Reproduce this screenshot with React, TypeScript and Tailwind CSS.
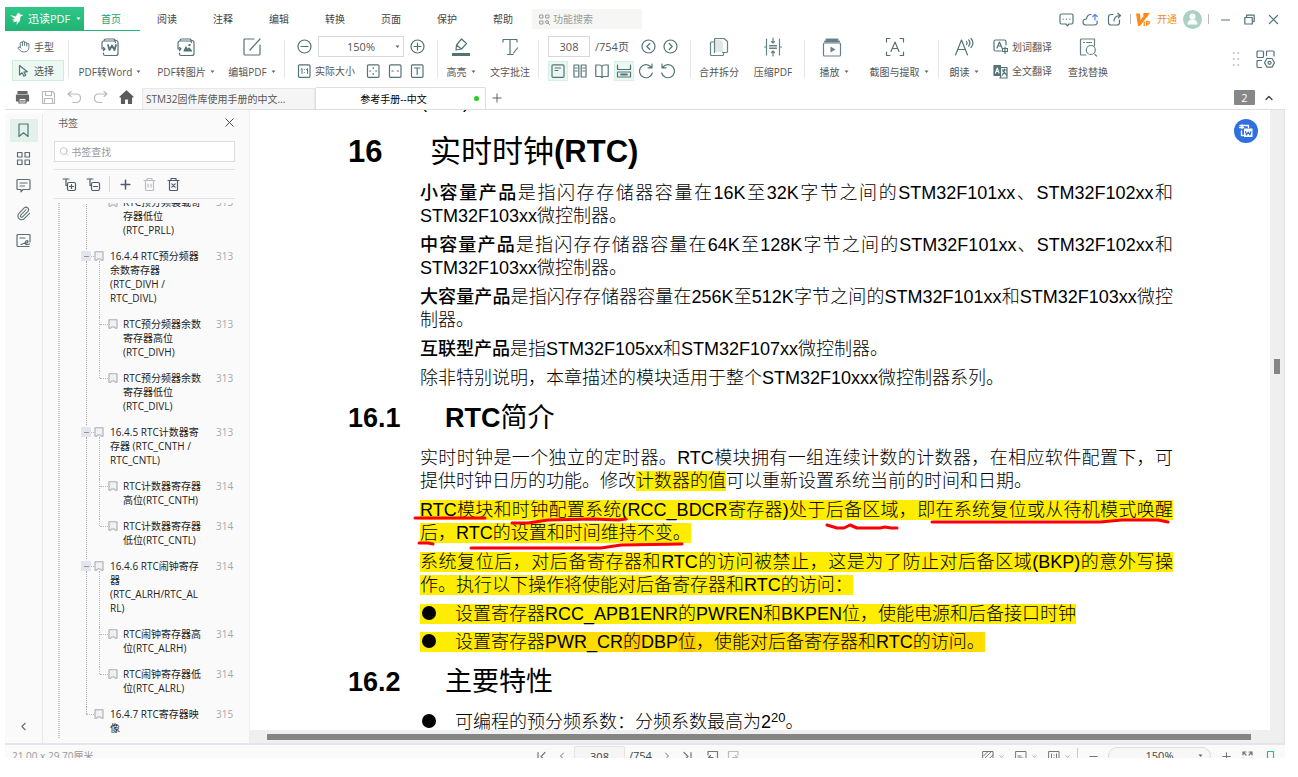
import React from "react";
import type { ReactNode } from "react";
import { Hand, Paperclip, Search, Plus, Minus, X, ChevronLeft, ChevronRight, ChevronUp, ChevronDown } from "lucide-react";

type IconProps = { s?: number; w?: number; sw?: number; c?: string; children: ReactNode };

/* Stroke icon on a pixel grid of its own size. */
function Icon({ s = 20, w, sw = 1.2, c = "", children }: IconProps) {
  return (
    <svg
      aria-hidden="true"
      width={w ?? s}
      height={s}
      viewBox={`0 0 ${w ?? s} ${s}`}
      fill="none"
      stroke="currentColor"
      strokeWidth={sw}
      strokeLinecap="round"
      strokeLinejoin="round"
      className={`shrink-0 ${c}`}
    >
      {children}
    </svg>
  );
}

function Caret({ c = "" }: { c?: string }) {
  return (
    <svg aria-hidden="true" width="5" height="4" viewBox="0 0 5 4" className={`shrink-0 fill-[#666] ${c}`}>
      <path d="M0.5 0.5h4L2.500 3z" />
    </svg>
  );
}

function Divider() {
  return <span className="h-[38px] w-px shrink-0 bg-[#e6e6e6]" />;
}

function BigTool({ label, caret, w, children }: { label: string; caret?: boolean; w: string; children: ReactNode }) {
  return (
    <button className={`flex h-[46px] shrink-0 flex-col items-center justify-between whitespace-nowrap ${w}`}>
      <span className="flex h-[22px] items-center">{children}</span>
      <span className="flex h-5 items-center gap-1">
        {label}
        {caret && <Caret />}
      </span>
    </button>
  );
}

function SmallTool({ label, active, children }: { label: string; active?: boolean; children: ReactNode }) {
  return (
    <button
      aria-label={label}
      className={`flex size-5 shrink-0 items-center justify-center border ${active ? "border-[#d3f0e3] bg-[#eaf8f2]" : "border-transparent"}`}
    >
      {children}
    </button>
  );
}

function Ribbon() {
  return (
    <div className="flex h-[55px] shrink-0 items-center overflow-hidden pl-[7px] text-[#555]">
      <div className="flex w-[52px] shrink-0 flex-col gap-[3px]">
        <button className="flex h-[21px] items-center gap-1 border border-transparent px-1">
          <Hand size={13} strokeWidth={1.7} className="text-[#547377]" />
          手型
        </button>
        <button className="flex h-[21px] items-center gap-1 border border-[#cfeedd] bg-[#ecf9f3] px-1">
          <Icon s={13} c="text-[#547377]">
            <path d="M2.500 1.500v9.500l2.600-2.200 1.800 3.400 1.800-.9-1.700-3.200 3.400-.4z" />
          </Icon>
          选择
        </button>
      </div>
      <span className="w-1 shrink-0" />
      <Divider />
      <div className="flex w-[215px] shrink-0 gap-[6px] pl-1">
        <BigTool label="PDF转Word" caret w="w-[74px]">
          <Icon s={20} c="text-[#547377]">
            <path d="M4 4V3.500Q4 2 6 2h8l1.500 1.500M2 8V5.500q0-1.500 2-1.500h10q1.500 0 1.500 1.500M2 8v4h3M3.500 10.500l1.500 1.500-1.500 1.500M3.500 16v1q0 1.500 1.500 1.500h11q2 0 2-2V5.500q0-1.500-1.500-2" />
            <path strokeWidth="1.800" d="M8 8l1.500 5L12 8.500l2.500 4.500L16 8" />
          </Icon>
        </BigTool>
        <BigTool label="PDF转图片" caret w="w-[66px]">
          <Icon s={20} c="text-[#547377]">
            <path d="M4 4V3.500Q4 2 6 2h8l1.500 1.500M2 8V5.500q0-1.500 2-1.500h10q1.500 0 1.500 1.500M2 8v4h3M3.500 10.500l1.500 1.500-1.500 1.500M3.500 16v1q0 1.500 1.500 1.500h11q2 0 2-2V5.500q0-1.500-1.500-2" />
            <path fill="currentColor" d="M8 14l2-4 2 3 1-2 2.500 3zM13 7.500h1v1h-1z" />
          </Icon>
        </BigTool>
        <BigTool label="编辑PDF" caret w="w-[54px]">
          <Icon s={20} c="text-[#547377]">
            <path d="M12 2H3Q2 2 2 3v14q0 1 1 1h14q1 0 1-1V8M18 2L8 13" />
          </Icon>
        </BigTool>
      </div>
      <Divider />
      <div className="flex w-[152px] shrink-0 flex-col gap-1 pl-3">
        <div className="flex h-[21px] items-center gap-[6px] text-[#547377]">
          <button aria-label="缩小">
            <Icon s={15}>
              <circle cx="7.500" cy="7.500" r="6.500" />
              <path d="M4 7.500h7" />
            </Icon>
          </button>
          <label className="relative flex h-[21px] w-[86px] items-center">
            <select aria-label="缩放比例" className="h-[21px] w-full appearance-none border border-[#d8d8d8] bg-white text-center text-[11px] text-[#555] [text-align-last:center]">
              <option>150%</option>
            </select>
            <Caret c="absolute right-1" />
          </label>
          <button aria-label="放大">
            <Icon s={15}>
              <circle cx="7.500" cy="7.500" r="6.500" />
              <path d="M4 7.500h7M7.500 4v7" />
            </Icon>
          </button>
        </div>
        <div className="flex h-5 items-center text-[#547377]">
          <button className="flex items-center gap-1 text-[#555]">
            <Icon s={14} c="text-[#547377]">
              <rect x="1.500" y=".800" width="11.500" height="12.500" rx="1" />
              <path strokeWidth="1" d="M4 5.500l1-1v5M7.300 5.500v.1M7.300 8.500v.1M9.500 5.500l1-1v5" />
            </Icon>
            实际大小
          </button>
          <span className="flex gap-[2px] pl-2">
            <SmallTool label="适合页面">
              <Icon s={14}>
                <rect x="1.500" y=".800" width="11.500" height="12.500" rx="1" />
                <path d="M7.200 3.500v1M7.200 9.500v1M3.800 7h1M9.800 7h1" />
              </Icon>
            </SmallTool>
            <SmallTool label="适合宽度">
              <Icon s={14}>
                <rect x="1.500" y=".800" width="11.500" height="12.500" rx="1" />
                <path d="M4 7h1.200M9.300 7h1.200" />
              </Icon>
            </SmallTool>
            <SmallTool label="适合文字">
              <Icon s={14}>
                <rect x="1.500" y=".800" width="11.500" height="12.500" rx="1" />
                <path d="M4.500 4h5.500M7.200 4v6.500" />
              </Icon>
            </SmallTool>
          </span>
        </div>
      </div>
      <Divider />
      <div className="flex w-[100px] shrink-0 gap-2 pl-1">
        <BigTool label="高亮" caret w="w-[38px]">
          <Icon s={20} c="text-[#547377]">
            <path strokeWidth="3" strokeLinecap="butt" d="M1 17.500h18" />
            <path d="M5 13l.5-5 5-6 5 4.500-5 5.500zM5.500 8l5 4" />
          </Icon>
        </BigTool>
        <BigTool label="文字批注" w="w-11">
          <Icon s={20} c="text-[#547377]">
            <path d="M3 5V2.500h14V5M10 2.500V17M7.500 17.500H13M17.500 11l-4 5" />
          </Icon>
        </BigTool>
      </div>
      <Divider />
      <div className="flex w-[151px] shrink-0 flex-col gap-1 pl-[9px] text-[#547377]">
        <div className="flex h-[21px] items-center">
          <input aria-label="页码" defaultValue="308" className="h-[21px] w-[42px] border border-[#d8d8d8] text-center text-[11px] text-[#555]" />
          <span className="w-[51px] pl-[5px] text-[11px] text-[#555]">/754页</span>
          <button aria-label="上一页">
            <Icon s={15}>
              <circle cx="7.500" cy="7.500" r="6.500" />
              <path d="M8.800 4.500l-3 3 3 3" />
            </Icon>
          </button>
          <button aria-label="下一页" className="ml-[7px]">
            <Icon s={15}>
              <circle cx="7.500" cy="7.500" r="6.500" />
              <path d="M6.200 4.500l3 3-3 3" />
            </Icon>
          </button>
        </div>
        <div className="flex h-5 items-center gap-[2px]">
          <SmallTool label="单页" active>
            <Icon s={14}>
              <rect x="1" y=".800" width="12" height="12.500" rx="1" />
              <path d="M4 4h5.500M4 6.500h3" />
            </Icon>
          </SmallTool>
          <SmallTool label="双页">
            <Icon s={14}>
              <path d="M1 1h4.800v12H1zM8.200 1H13v12H8.200zM2.500 4h1.700M2.500 7h1.700M9.800 4h1.700M9.800 7h1.700" />
            </Icon>
          </SmallTool>
          <SmallTool label="书籍">
            <Icon s={14}>
              <path d="M7 2.500Q6 1 4.500 1H.8v11.500h4.700L7 13.500l1.500-1h4.700V1H9.500Q8 1 7 2.500zM7 2.500v11" />
            </Icon>
          </SmallTool>
          <SmallTool label="连续" active>
            <Icon s={14} w={16}>
              <path d="M1.500 1v4.500h13V1M1.500 13V8h13v5z" />
              <path strokeWidth="1.800" d="M5 10.500h6" />
            </Icon>
          </SmallTool>
          <SmallTool label="顺时针旋转">
            <Icon s={16}>
              <path d="M13 4A6.500 6.500 0 1 0 14.300 10M14 1v3.800h-4" />
            </Icon>
          </SmallTool>
          <SmallTool label="逆时针旋转">
            <Icon s={16}>
              <path d="M3 4A6.500 6.500 0 1 1 1.700 10M2 1v3.800h4" />
            </Icon>
          </SmallTool>
        </div>
      </div>
      <Divider />
      <div className="flex w-[113px] shrink-0 gap-[10px] pl-[6px]">
        <BigTool label="合并拆分" w="w-11">
          <Icon s={20} c="text-[#668285]">
            <path d="M5.500 5H2.500Q1.500 5 1.500 6v11.500q0 1 1 1h11q1 0 1-1V16" />
            <path fill="#dfe7e7" stroke="none" d="M6 2.500h6l2 3V15H6z" />
            <path d="M5.500 15.500V2.500q0-1 1-1H15l3.500 3V14.500q0 1-1 1h-4" />
          </Icon>
        </BigTool>
        <BigTool label="压缩PDF" w="w-11">
          <Icon s={20} c="text-[#668285]">
            <path d="M3.500 2v16M16.500 2v16M1.500 10h1M17.500 10h1M6.500 8.500h7M6.500 11.500h7M6.500 10h7M10 1v5M8.500 4.500L10 6l1.500-1.500M10 19v-5M8.500 15.500L10 14l1.500 1.500" />
          </Icon>
        </BigTool>
      </div>
      <Divider />
      <div className="flex w-[133px] shrink-0 gap-[14px] pl-[9px]">
        <BigTool label="播放" caret w="w-10">
          <Icon s={20} c="mr-1 text-[#668285]">
            <path strokeWidth="2" d="M4.500 2.500h11M3 4.500h14" />
            <rect x="1.500" y="6" width="17" height="13" rx="1" />
            <path fill="currentColor" stroke="none" d="M8.500 9.500l5 3-5 3z" />
          </Icon>
        </BigTool>
        <BigTool label="截图与提取" caret w="w-[62px]">
          <Icon s={20} c="mr-2 text-[#547377]">
            <path d="M1.500 5V1.500H5M15 1.500h3.500V5M18.500 15v3.500H15M5 18.500H1.500V15M6 14.500L10 5l4 9.500M7.300 11.500h5.400" />
          </Icon>
        </BigTool>
      </div>
      <Divider />
      <div className="flex shrink-0 items-center pl-1">
        <BigTool label="朗读" caret w="w-[42px]">
          <Icon s={20} c="text-[#547377]">
            <path d="M1.500 18L7.500 3l6 15M3.500 12.500h8M12.500 4.500q1.200 1.500 0 3M14.700 3q2.500 3 0 6M17 1.500q4 4.500 0 9" />
          </Icon>
        </BigTool>
        <div className="flex flex-col gap-1 pl-2">
          <button className="flex h-[21px] items-center gap-1">
            <Icon s={15} c="text-[#547377]">
              <path d="M8 12H2.500Q1 12 1 10.500V2.500Q1 1 2.500 1h9Q13 1 13 2.500V6M4 9l2.500-6L9 9M5 7h3M9.500 9.500h5v3h-5zM12 8v6.500" />
            </Icon>
            划词翻译
          </button>
          <button className="flex h-5 items-center gap-1">
            <Icon s={15} c="text-[#547377]">
              <path fill="currentColor" d="M1 1.500h6.500v10H1z" />
              <path d="M8 3.500h6V14H7l1-2M9.500 6h4M11.500 5v1l-2 5M10 7l3.500 4" />
              <path stroke="#fff" strokeWidth="1.100" d="M2.500 9l1.800-5L6 9M3 7.500h2.500" />
            </Icon>
            全文翻译
          </button>
        </div>
        <span className="w-[14px]" />
        <BigTool label="查找替换" w="w-11">
          <Icon s={20} c="text-[#668285]">
            <path d="M8 18H3.500Q2.500 18 2.500 17V3q0-1 1-1h13v7M5.500 5.500h1M8.500 5.500h5M17 17.500l1.500 1.500" />
            <circle cx="12.800" cy="13" r="4.500" />
          </Icon>
        </BigTool>
      </div>
      <div className="ml-auto flex shrink-0 items-center gap-[15px] pr-[10px] text-[#547377]">
        <Icon s={16} w={8} sw={1.6} c="text-[#b5b5b5]">
          <path d="M1.500 2h.5M6 2h.5M1.500 8h.5M6 8h.5M1.500 14h.5M6 14h.5" />
        </Icon>
        <button aria-label="自定义工具栏">
          <Icon s={20}>
            <rect x="2" y="2" width="6.500" height="6.500" rx="1" />
            <path d="M11.500 6.500V3q0-1 1-1h5.500q1 0 1 1v4M6.500 11.500H3q-1 0-1 1v5q0 1 1 1h3.500" />
            <path d="M12 9.500h5l2.500 4.300-2.500 4.300h-5l-2.500-4.300z" />
            <circle cx="14.500" cy="13.800" r="1.500" />
          </Icon>
        </button>
      </div>
    </div>
  );
}

const menus = ["首页", "阅读", "注释", "编辑", "转换", "页面", "保护", "帮助"];

function TitleBar() {
  return (
    <header className="flex h-6 shrink-0 items-center text-[#444]">
      <button className="flex h-6 w-[79px] shrink-0 items-center bg-linear-to-b from-[#2fc78a] to-[#20b373] pl-[5px] text-[11px] text-white">
        <svg aria-hidden="true" width="14" height="14" viewBox="0 0 14 14" className="shrink-0 fill-white">
          <path d="M0 3l6 1.500L7 2l2-1.500 1 2 3.500.5-3 1.500-.5 4L6.500 13l.5-3.500-4 .8 1.500-1.500L1.500 8 5 7 0 3z" />
        </svg>
        <span className="pl-1">迅读PDF</span>
        <svg aria-hidden="true" width="5" height="4" viewBox="0 0 5 4" className="ml-[6px] shrink-0 fill-white">
          <path d="M0.500 0.500h4L2.500 3z" />
        </svg>
      </button>
      <nav className="flex h-6 shrink-0">
        {menus.map((m, i) => (
          <button key={m} className={`w-14 border-b pr-[2px] ${i === 0 ? "border-[#1fb978] text-[#23a36c]" : "border-transparent"}`}>
            {m}
          </button>
        ))}
      </nav>
      <label className="flex h-5 w-[110px] shrink-0 items-center gap-[3px] bg-[#f6f7f5] pl-[7px] text-[#999]">
        <Icon s={11} sw={1} c="text-[#999]">
          <path d="M1 1h3v3H1zM7 1h3v3H7zM1 7h3v3H1zM9.300 9.300l1.200 1.200" />
          <circle cx="8" cy="8" r="1.500" />
        </Icon>
        <input aria-label="功能搜索" placeholder="功能搜索" className="w-20 bg-transparent outline-none placeholder:text-[#999]" />
      </label>
      <div className="ml-auto flex shrink-0 items-center text-[#547377]">
        <button aria-label="消息" className="flex w-6 justify-center">
          <Icon s={15}>
            <path d="M6 12H2.500Q1 12 1 10.500v-7Q1 2 2.500 2h10Q14 2 14 3.500v7q0 1.500-1.500 1.500H10l-1.500 1.800L7 12M4.200 7v.2M7.500 7v.2M10.800 7v.2" />
          </Icon>
        </button>
        <button aria-label="云上传" className="flex w-6 justify-center">
          <Icon s={15} w={17}>
            <path d="M15 9q1 4-3 4H4Q1 13 1 10t3.500-3Q5 2.500 9 2.500" />
            <path stroke="#4a86f0" d="M13 8V2.500M10.800 4.500L13 2.500l2.200 2" />
          </Icon>
        </button>
        <button aria-label="分享" className="flex w-6 justify-center">
          <Icon s={15}>
            <path d="M6 2.500H4Q1.500 2.500 1.500 5v5.500Q1.500 13 4 13h6q2.500 0 2.500-2.500V8M7 9q0-5 6-5.500M10.800 1.200l2.700 2.300-2.200 2.300" />
          </Icon>
        </button>
        <span className="mx-1 h-[10px] w-px bg-[#bbb]" />
        <button className="flex items-center gap-[6px] text-[#f08c1e]">
          <svg aria-hidden="true" width="16" height="15" viewBox="0 0 16 15">
            <path d="M1 1.500h4L5.500 8 9 3.500H7.500L9 1h6L5 14H3z" fill="#ff8a1c" />
            <path d="M9.200 9.500V14M11.500 14V9.500h1.500q1.500 0 1.500 1.200T13 12h-1.500" stroke="#ff8a1c" strokeWidth="1.300" fill="none" />
          </svg>
          开通
        </button>
        <svg aria-label="用户" width="19" height="19" viewBox="0 0 19 19" className="ml-[6px]">
          <circle cx="9.500" cy="9.500" r="9.500" fill="#a9d2c4" />
          <circle cx="9.500" cy="6.500" r="3" fill="#fff" />
          <path d="M4.500 14.500q0-5 5-5t5 5z" fill="#fff" />
        </svg>
        <span className="ml-[6px] h-[10px] w-px bg-[#bbb]" />
        <button aria-label="最小化" className="ml-1 flex w-6 justify-center">
          <Icon s={11}>
            <path d="M1.500 6h8" />
          </Icon>
        </button>
        <button aria-label="还原" className="flex w-6 justify-center">
          <Icon s={11}>
            <path d="M.8 3.500h7.500v6.500H.8zM2.500 3.300V1.200h7.700v6.300H8.500" />
          </Icon>
        </button>
        <button aria-label="关闭" className="flex w-6 justify-center">
          <Icon s={11}>
            <path d="M1.500 1.500l8 8M9.500 1.500l-8 8" />
          </Icon>
        </button>
      </div>
    </header>
  );
}

function TabBar() {
  return (
    <div className="flex h-6 shrink-0 items-center border-b border-[#dedede] text-[#333]">
      <div className="flex w-[137px] shrink-0 items-center pl-1">
        <button aria-label="打印" className="flex w-[26px] justify-center text-[#666]">
          <Icon s={15}>
            <path fill="currentColor" d="M3 1.500h9v2H3zM1.500 5h12v6h-2V8.500h-8V11h-2z" />
            <path d="M4 8.500h7V13H4zM5.500 10.800h4" />
          </Icon>
        </button>
        <button aria-label="保存" className="flex w-[26px] justify-center text-[#bbb]">
          <Icon s={15}>
            <path d="M1.500 1.500h10l2 2v10h-12zM4.500 1.500v4h6v-4M3.500 13.500V8.500h8v5" />
          </Icon>
        </button>
        <button aria-label="撤销" className="flex w-[26px] justify-center text-[#bbb]">
          <Icon s={15}>
            <path d="M4 1.500L1 4l3 2.500M1 4h8.500q4 0 4 4t-4 4.500H6" />
          </Icon>
        </button>
        <button aria-label="重做" className="flex w-[26px] justify-center text-[#bbb]">
          <Icon s={15}>
            <path d="M11 1.500L14 4l-3 2.500M14 4H5.500q-4 0-4 4t4 4.500H9" />
          </Icon>
        </button>
        <button aria-label="主页" className="flex w-[26px] justify-center text-[#5c5c5c]">
          <Icon s={15}>
            <path fill="currentColor" d="M7.500 1L14 7h-1.500v6.500H9.500V9h-4v4.500h-3V7H1z" />
          </Icon>
        </button>
      </div>
      <button className="h-[21px] w-[173px] shrink-0 self-end border border-b-0 border-[#e8e8e8] bg-[#f5f5f5] pl-[3px] text-left text-[#555]">STM32固件库使用手册的中文...</button>
      <button className="flex h-[22px] w-[171px] shrink-0 items-center self-end rounded-t-[2px] border border-b-0 border-[#dedede] bg-white">
        <span className="flex-1 pr-[3px] text-center text-black">参考手册--中文</span>
        <span className="mr-[6px] size-[5px] rounded-full bg-[#27cf1f]" />
      </button>
      <button aria-label="新建标签" className="pl-1">
        <Plus size={14} strokeWidth={1.6} className="text-[#555]" />
      </button>
      <div className="ml-auto flex items-center pr-[10px]">
        <span className="flex h-[15px] w-[21px] items-center justify-center rounded-[1px] bg-[#85888b] text-[11px] text-white">2</span>
        <button aria-label="收起功能区" className="pl-2">
          <ChevronUp size={12} strokeWidth={2.4} />
        </button>
      </div>
    </div>
  );
}

function BookmarkGlyph({ big }: { big?: boolean }) {
  return big ? (
    <Icon s={15}>
      <path d="M3 1h9v12.500L7.500 9.800 3 13.500z" />
    </Icon>
  ) : (
    <Icon s={10} sw={1.1} c="text-[#a9acb0]">
      <path fill="#f1f1f4" d="M1 .7h8v8.600H7.500L6.500 8h-3L2.500 9.300H1z" />
    </Icon>
  );
}

type Node = { lines: string[]; page: number; children?: Node[] };

const tree: Node[] = [
  {
    lines: ["16.4.4 RTC预分频器", "余数寄存器", "(RTC_DIVH /", "RTC_DIVL)"],
    page: 313,
    children: [
      { lines: ["RTC预分频器余数", "寄存器高位", "(RTC_DIVH)"], page: 313 },
      { lines: ["RTC预分频器余数", "寄存器低位", "(RTC_DIVL)"], page: 313 },
    ],
  },
  {
    lines: ["16.4.5 RTC计数器寄", "存器 (RTC_CNTH /", "RTC_CNTL)"],
    page: 313,
    children: [
      { lines: ["RTC计数器寄存器", "高位(RTC_CNTH)"], page: 314 },
      { lines: ["RTC计数器寄存器", "低位(RTC_CNTL)"], page: 314 },
    ],
  },
  {
    lines: ["16.4.6 RTC闹钟寄存", "器", "(RTC_ALRH/RTC_AL", "RL)"],
    page: 314,
    children: [
      { lines: ["RTC闹钟寄存器高", "位(RTC_ALRH)"], page: 314 },
      { lines: ["RTC闹钟寄存器低", "位(RTC_ALRL)"], page: 314 },
    ],
  },
  { lines: ["16.4.7 RTC寄存器映", "像"], page: 315 },
];

function Lines({ node }: { node: Node }) {
  return (
    <a href={`#page-${node.page}`} className="flex flex-1 justify-between text-[#222]">
      <span className="whitespace-nowrap">
        {node.lines.map((l) => (
          <span key={l} className="block leading-[14px]">
            {l}
          </span>
        ))}
      </span>
      <span className="w-[19px] text-[#a8a8a8]">{node.page}</span>
    </a>
  );
}

/* A child row: its rail runs from the row top to the next row, or to its own icon when it is the last. */
function Leaf({ node, last }: { node: Node; last?: boolean }) {
  return (
    <li className="flex">
      <span className={`w-px border-l border-dotted border-[#b5b5b5] ${last ? "h-[7px]" : ""}`} />
      <span className="mt-[7px] h-px w-2 border-t border-dotted border-[#b5b5b5]" />
      <span className="mt-[2px] mr-[5px]">
        <BookmarkGlyph />
      </span>
      <span className="flex flex-1 pb-3">
        <Lines node={node} />
      </span>
    </li>
  );
}

function Branch({ node, last }: { node: Node; last?: boolean }) {
  return (
    <li className="flex">
      <span className="flex w-[10px] shrink-0 flex-col items-center">
        {node.children ? (
          <button aria-label="折叠" className="mt-[2px] flex h-[10px] w-[10px] shrink-0 items-center justify-center bg-[#e3e5ee]">
            <Minus size={7} strokeWidth={3} className="text-[#888]" />
          </button>
        ) : (
          <span className="h-[7px] border-l border-dotted border-[#a5a5a5]" />
        )}
        {!last && <span className="flex-1 border-l border-dotted border-[#a5a5a5]" />}
      </span>
      <div className="flex-1">
        <div className="flex">
          <span className={`mt-[7px] h-px border-t border-dotted border-[#b5b5b5] ${node.children ? "w-[3px]" : "-ml-[5px] w-2"}`} />
          <span className="flex w-4 shrink-0 flex-col pt-[2px]">
            <BookmarkGlyph />
            {node.children && <span className="ml-[5px] flex-1 border-l border-dotted border-[#b5b5b5]" />}
          </span>
          <span className="flex flex-1 pb-3">
            <Lines node={node} />
          </span>
        </div>
        {node.children && (
          <ul className="pl-2">
            {node.children.map((c, i) => (
              <Leaf key={c.lines.join()} node={c} last={i === node.children!.length - 1} />
            ))}
          </ul>
        )}
      </div>
    </li>
  );
}

function Sidebar() {
  return (
    <>
      <nav className="mt-1 flex w-[38px] shrink-0 flex-col items-center border-r border-[#e9e9e9] bg-[#fafafa] pt-[5px] text-[#5b6f72]">
        <button aria-label="书签" className="flex h-[23px] w-7 items-center justify-center bg-[#e0f2ea]">
          <BookmarkGlyph big />
        </button>
        <button aria-label="缩略图" className="flex h-8 w-7 items-center justify-center">
          <Icon s={15}>
            <path d="M1.500 1.500h4.500V6H1.500zM9 1.500h4.500V6H9zM1.500 9h4.500v4.500H1.500zM9 9h4.500v4.500H9z" />
          </Icon>
        </button>
        <button aria-label="注释" className="flex h-[23px] w-7 items-center justify-center">
          <Icon s={15}>
            <path d="M7 11.500l-2 2.300V11.500H2q-1 0-1-1v-8q0-1 1-1h11q1 0 1 1v8q0 1-1 1zM4 5h7M4 8h4.500" />
          </Icon>
        </button>
        <button aria-label="附件" className="flex h-8 w-7 items-center justify-center">
          <Paperclip size={15} strokeWidth={1.7} />
        </button>
        <button aria-label="签名" className="flex h-[23px] w-7 items-center justify-center">
          <Icon s={15}>
            <path d="M14 9V2.500q0-1-1-1H2q-1 0-1 1v10q0 1 1 1h11M4 5h5" />
            <path d="M5 11.500l4-1.500 1-2q2-1 2 .5t-3 2q1 2 4.500.5" />
          </Icon>
        </button>
        <button aria-label="收起侧栏" className="mt-auto mb-[10px]">
          <ChevronLeft size={13} strokeWidth={2} />
        </button>
      </nav>
      <aside className="flex w-[207px] shrink-0 flex-col border-r border-[#eee] bg-[#fafafa] pr-[14px] pl-[11px]">
        <div className="flex h-[25px] shrink-0 items-center justify-between pl-1 text-[#666]">
          书签
          <button aria-label="关闭书签">
            <X size={15} strokeWidth={1.5} className="-mr-[2px] text-[#444]" />
          </button>
        </div>
        <label className="mt-[6px] flex h-[21px] shrink-0 items-center gap-[2px] border border-[#dcdcdc] bg-white pl-1">
          <Search size={11} strokeWidth={1.5} className="text-[#aaa]" />
          <input aria-label="书签查找" placeholder="书签查找" className="w-full bg-transparent outline-none placeholder:text-[#999]" />
        </label>
        <div className="mt-[7px] flex h-[30px] shrink-0 items-center border-y border-[#dfe1e8] pl-2 text-[#4d5b70]">
          <Icon s={15}>
            <path d="M1 2h6M4 2v6.500h1.500" />
            <rect x="5.500" y="5.500" width="8" height="8" rx="1.500" />
            <path d="M7.500 9.500h4M9.500 7.500v4" />
          </Icon>
          <Icon s={15} c="ml-[9px]">
            <path d="M1 2h6M4 2v6.500h1.500" />
            <rect x="5.500" y="5.500" width="8" height="8" rx="1.500" />
            <path d="M7.500 9.500h4" />
          </Icon>
          <span className="ml-2 h-4 w-px bg-[#d8d8d8]" />
          <Plus size={15} strokeWidth={2.4} className="ml-2" />
          <Icon s={15} c="ml-[9px] text-[#bcbcc4]">
            <path d="M2 3.500h11M5 3V1.500h5V3M3.500 3.500v9q0 1 1 1h6q1 0 1-1v-9M6 7v3M9 7v3" />
          </Icon>
          <Icon s={15} c="ml-[9px]">
            <path d="M2 3.500h11M5 3V1.500h5V3M3.500 3.500v9q0 1 1 1h6q1 0 1-1v-9M5.800 6.800l3.400 3.400M9.200 6.800l-3.400 3.400" />
          </Icon>
        </div>
        <div className="mt-1 mb-[5px] flex min-h-0 flex-1 overflow-hidden">
          <span className="ml-1 w-[2px] shrink-0 border-x border-dotted border-[#c8c8c8]" />
          <ul className="-mt-2 ml-[21px] flex-1">
            <li className="flex">
              <span className="flex w-[10px] shrink-0 justify-center">
                <span className="border-l border-dotted border-[#a5a5a5]" />
              </span>
              <ul className="flex-1 pl-2">
                <Leaf node={{ lines: ["RTC预分频装载寄", "存器低位", "(RTC_PRLL)"], page: 313 }} last />
              </ul>
            </li>
            {tree.map((n, i) => (
              <Branch key={n.lines[0]} node={n} last={i === tree.length - 1} />
            ))}
          </ul>
        </div>
      </aside>
    </>
  );
}

const yellow = "bg-[#ffed00]";

function H2({ no, children }: { no: string; children: ReactNode }) {
  return (
    <h2 className="mt-[13px] mb-[14px] flex text-[27px] leading-[30px] font-bold text-black">
      <span className="w-[97px] shrink-0">{no}</span>
      <span>{children}</span>
    </h2>
  );
}

function Dot() {
  return (
    <span className="inline-block w-[35px] pl-[2px]">
      <span className="block size-[14px] rounded-full bg-black" />
    </span>
  );
}

function Document() {
  return (
    <article className="h-full overflow-hidden bg-white pr-[97px] pl-[98px] font-['Liberation_Sans','Noto_Sans_CJK_SC',sans-serif] text-lg leading-[23px] text-black">
      <div aria-hidden="true" className="flex h-[2px] items-end gap-9 overflow-hidden pl-[73px] leading-5">
        <span>(</span>
        <span>)</span>
      </div>
      <h1 className="mt-[22px] mb-3 flex text-[31px] leading-9 font-bold">
        <span className="w-[82px] shrink-0">16</span>
        <span>
          <span className="font-normal">实时时钟</span>(RTC)
        </span>
      </h1>
      <div className="flex flex-col gap-[6px] pl-[72px] text-justify font-light">
        <p>
          <b className="font-medium">小容量产品</b>是指闪存存储器容量在16K至32K字节之间的STM32F101xx、STM32F102xx和STM32F103xx微控制器。
        </p>
        <p>
          <b className="font-medium">中容量产品</b>是指闪存存储器容量在64K至128K字节之间的STM32F101xx、STM32F102xx和STM32F103xx微控制器。
        </p>
        <p>
          <b className="font-medium">大容量产品</b>是指闪存存储器容量在256K至512K字节之间的STM32F101xx和STM32F103xx微控制器。
        </p>
        <p>
          <b className="font-medium">互联型产品</b>是指STM32F105xx和STM32F107xx微控制器。
        </p>
        <p>除非特别说明，本章描述的模块适用于整个STM32F10xxx微控制器系列。</p>
      </div>
      <H2 no="16.1">
        RTC<span className="font-normal">简介</span>
      </H2>
      <div className="flex flex-col gap-[6px] pl-[72px] text-justify font-light">
        <p>
          实时时钟是一个独立的定时器。RTC模块拥有一组连续计数的计数器，在相应软件配置下，可提供时钟日历的功能。修改
          <mark className={yellow}>计数器的值</mark>可以重新设置系统当前的时间和日期。
        </p>
        <div className="relative">
          <p>
            <mark className={yellow}>RTC模块和时钟配置系统(RCC_BDCR寄存器)处于后备区域，即在系统复位或从待机模式唤醒后，RTC的设置和时间维持不变。</mark>
          </p>
          <svg
            aria-hidden="true"
            width="753"
            height="56"
            viewBox="0 0 753 56"
            fill="none"
            stroke="#fb0007"
            strokeWidth="3"
            strokeLinecap="round"
            strokeLinejoin="round"
            className="absolute top-0 left-0 overflow-visible"
          >
            <path d="M-5 19h70M92 24h16l20-3 45-1 25 1 8-1M407 26l10 3h7l6-3 7 3h23l5-1 6 1h6M512 23h168l22-2h36l10 2M-1 44h9l5 1M51 49h130l20-3 61-1" />
          </svg>
        </div>
        <p>
          <mark className={yellow}>系统复位后，对后备寄存器和RTC的访问被禁止，这是为了防止对后备区域(BKP)的意外写操作。执行以下操作将使能对后备寄存器和RTC的访问：</mark>
        </p>
        <ul className="flex flex-col gap-[5px]">
          <li>
            <mark className={yellow}>
              <Dot />
              设置寄存器RCC_APB1ENR的PWREN和BKPEN位，使能电源和后备接口时钟
            </mark>
          </li>
          <li>
            <mark className={yellow}>
              <Dot />
              设置寄存器
            </mark>
            <mark className="bg-[#ffdc00]">PWR_CR</mark>
            <mark className="bg-[#ffcb00]">的</mark>
            <mark className="bg-[#ffdc00]">DBP</mark>
            <mark className="bg-[#ffcb00]">位</mark>
            <mark className="bg-[#ffdc00]">，使能对后备寄存器和RTC的访问。</mark>
          </li>
        </ul>
      </div>
      <H2 no="16.2">
        <span className="font-normal">主要特性</span>
      </H2>
      <ul className="pl-[72px] font-light">
        <li className="whitespace-nowrap">
          <Dot />
          可编程的预分频系数：分频系数最高为2<sup className="text-[13px] leading-none">20</sup>。
        </li>
      </ul>
    </article>
  );
}

function Viewer() {
  return (
    <main className="flex min-w-0 flex-1 border-r border-[#dfe1e8] bg-[#efefef]">
      <div className="relative flex min-w-0 flex-1 flex-col">
        <div className="min-h-0 flex-1">
          <Document />
        </div>
        <div className="flex h-[13px] shrink-0 items-center pr-[19px] pl-[17px]">
          <span className="h-[6px] flex-1 bg-[#858585]" />
        </div>
        <button aria-label="转换为Word" className="absolute top-[9px] right-3 flex size-6 items-center justify-center rounded-full bg-[#2f6fe0] text-white">
          <Icon s={16}>
            <path strokeWidth="1.400" d="M2 2.500h8.500v2M4 2v3.500M1.500 4.500h4M3.500 8v4.500h2" />
            <path fill="#fff" stroke="none" d="M6 5.500h8.500V14H6z" />
            <path stroke="#2f6fe0" strokeWidth="1.100" d="M7.500 8.500l1 3.500 1.700-3 1.700 3 1-3.500" />
          </Icon>
        </button>
      </div>
      <div className="flex w-[14px] shrink-0 justify-center">
        <span className="mt-[249px] h-[15px] w-[6px] bg-[#858585]" />
      </div>
    </main>
  );
}

function StatusBar() {
  return (
    <footer className="h-[15px] shrink-0 overflow-hidden border-t-2 border-[#e4e6ec] bg-[#fafafa] text-[#777]">
      <div className="flex h-[22px] items-center">
        <span className="w-[531px] shrink-0 pl-[7px] text-[#999]">21.00 x 29.70厘米</span>
        <button aria-label="第一页" className="w-5">
          <Icon s={11}>
            <path d="M2 1.500v8M9 1.500l-4 4 4 4" />
          </Icon>
        </button>
        <button aria-label="上一页" className="w-[18px]">
          <ChevronLeft size={12} />
        </button>
        <input aria-label="当前页" defaultValue="308" className="h-5 w-[51px] rounded-[2px] border border-[#e4e4e4] bg-[#f5f5f5] text-center text-[11px] text-[#444]" />
        <span className="w-9 pl-1 text-[11px] text-[#444]">/754</span>
        <button aria-label="下一页" className="w-[21px]">
          <ChevronRight size={12} />
        </button>
        <button aria-label="最后一页" className="w-6">
          <Icon s={11}>
            <path d="M2 1.500l4 4-4 4M9 1.500v8" />
          </Icon>
        </button>
        <Icon s={13}>
          <path d="M2 5V1.500h9.500v10H7M7 7.500H2.500M4.500 5.500l-2 2 2 2" />
        </Icon>
        <Icon s={13} c="ml-2 text-[#bbb]">
          <path d="M11 5V1.500H1.500v10H6M6 7.500h4.500M8.500 5.500l2 2-2 2" />
        </Icon>
        <div className="ml-auto flex shrink-0 items-center pr-2">
          <button aria-label="背景" className="flex w-[33px] items-center gap-1">
            <Icon s={12} sw={1}>
              <path d="M1 1.500h10v9H1zM1.500 6L6 1.500M1.500 9.500l8-8M5 10.500L11 5" />
            </Icon>
            <ChevronDown size={7} />
          </button>
          <button aria-label="页面布局" className="flex w-[33px] items-center gap-1">
            <Icon s={12} sw={1}>
              <path d="M1 1.500h10v9H1zM3 6h3M3 8h5" />
            </Icon>
            <ChevronDown size={7} />
          </button>
          <button aria-label="适合方式" className="flex w-[29px] items-center gap-1">
            <Icon s={12} sw={1}>
              <path d="M1 1.500h10v9H1zM3.500 4v4M6 5v.2M6 7.500v.2M8.500 4v4" />
            </Icon>
            <ChevronDown size={7} />
          </button>
          <span className="h-4 w-px bg-[#ccc]" />
          <button aria-label="缩小" className="flex w-[30px] justify-center">
            <Minus size={13} />
          </button>
          <label className="relative flex h-[18px] w-[103px] items-center">
            <select aria-label="状态栏缩放" className="h-[18px] w-full appearance-none rounded-full border border-[#dcdcdc] bg-[#f7f7f7] text-center text-[11px] text-[#444] [text-align-last:center]">
              <option>150%</option>
            </select>
            <Caret c="absolute right-2" />
          </label>
          <button aria-label="放大" className="flex w-[30px] justify-center">
            <Plus size={13} />
          </button>
          <Icon s={13}>
            <path d="M2 5V2h3M2 2l3 3M11 5V2H8M11 2L8 5M2 8v3h3M11 8v3H8" />
          </Icon>
          <Icon s={13} c="ml-[10px] text-[#2bbd84]">
            <path d="M3.500 8V1.500h6V8l2 1.500h-10z" />
          </Icon>
        </div>
      </div>
    </footer>
  );
}

export default function App() {
  return (
    <div
      lang="zh-CN"
      className="flex h-screen flex-col overflow-hidden bg-white pt-[7px] pr-[13px] pb-[19px] pl-[5px] font-['Open_Sans','Noto_Sans_CJK_SC',sans-serif] text-[10px] leading-[14px]"
    >
      <TitleBar />
      <Ribbon />
      <TabBar />
      <div className="flex min-h-0 flex-1 bg-white">
        <Sidebar />
        <Viewer />
      </div>
      <StatusBar />
    </div>
  );
}
